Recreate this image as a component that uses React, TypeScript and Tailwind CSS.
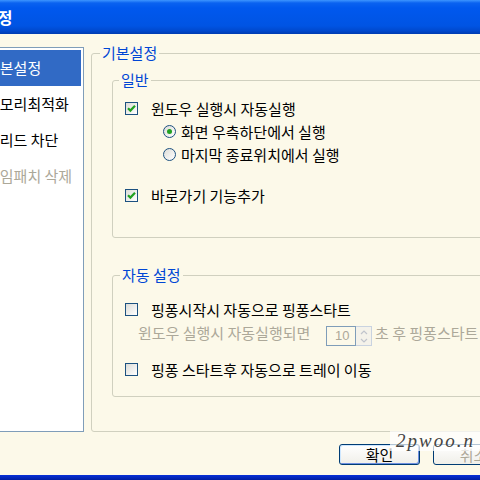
import React from 'react';

const Check = ({ checked, label, disabled }: { checked?: boolean; label: string; disabled?: boolean }) => (
  <div className="flex h-[23px] items-center">
    <span className="flex h-[13px] w-[13px] items-center justify-center border border-[#1C5180] bg-[linear-gradient(135deg,#DCDCD7,#FFFFFF)]">
      {checked && (
        <svg width="9" height="9" viewBox="0 0 9 9">
          <path d="M1 4.2 L3.4 6.6 L8 1.8" fill="none" stroke="#21A121" strokeWidth="2.2" />
        </svg>
      )}
    </span>
    <span className={`ml-[13px] ${disabled ? 'text-[#ACA899]' : 'text-black'}`}>{label}</span>
  </div>
);

const Radio = ({ checked, label }: { checked?: boolean; label: string }) => (
  <div className="flex h-[23px] items-center pl-[38px]">
    <span className="flex h-[13px] w-[13px] items-center justify-center rounded-full border border-[#1C5180] bg-[linear-gradient(135deg,#DCDCD7,#FFFFFF)]">
      {checked && <span className="h-[5px] w-[5px] rounded-full bg-[#21A121]" />}
    </span>
    <span className="ml-[5px]">{label}</span>
  </div>
);

const menu = [
  { name: '기본설정', selected: true },
  { name: '메모리최적화' },
  { name: '그리드 차단' },
  { name: '게임패치 삭제', disabled: true },
];

export default function App() {
  return (
    <div className="relative h-[480px] w-[480px] overflow-hidden bg-[#FCF9E9] font-['Noto_Sans_CJK_KR',sans-serif] text-[15px] leading-[16px]">
      <div className="ml-[-20px] flex h-[480px] w-[540px] flex-col">
        {/* title bar */}
        <div className="flex h-[34px] items-center bg-[linear-gradient(to_bottom,#3D95FF_0px,#0A62F0_3px,#0058EE_8px,#0054E3_26px,#0048CC_31px,#003CB0_34px)] pl-[3px]">
          <span className="text-[16px] font-bold text-white">설정</span>
        </div>

        <div className="flex items-start pt-[13px]">
          {/* left menu */}
          <div className="h-[385px] w-[104px] border border-[#7F9DB9] bg-white p-[2px]">
            {menu.map((m) => (
              <div
                key={m.name}
                className={`flex h-[36px] items-center whitespace-nowrap pl-[3px] ${
                  m.selected ? 'bg-[#316AC5] text-white' : m.disabled ? 'text-[#ACA899]' : 'text-black'
                }`}
              >
                {m.name}
              </div>
            ))}
          </div>

          {/* right panel */}
          <fieldset className="ml-[7px] mt-[-2px] h-[387px] w-[420px] rounded-[3px] border border-[#D0D0BF]">
            <legend className="ml-[8px] px-[2px] text-[#0046D5]">기본설정</legend>

            <fieldset className="ml-[20px] mt-[11px] h-[166px] w-[400px] rounded-[3px] border border-[#D0D0BF]">
              <legend className="ml-[6px] px-[2px] text-[#0046D5]">일반</legend>
              <div className="pl-[12px] pt-[9px]">
                <Check checked label="윈도우 실행시 자동실행" />
                <Radio checked label="화면 우측하단에서 실행" />
                <Radio label="마지막 종료위치에서 실행" />
                <div className="mt-[18px]">
                  <Check checked label="바로가기 기능추가" />
                </div>
              </div>
            </fieldset>

            <fieldset className="ml-[20px] mt-[29px] h-[130px] w-[400px] rounded-[3px] border border-[#D0D0BF]">
              <legend className="ml-[7px] px-[2px] text-[#0046D5]">자동 설정</legend>
              <div className="pl-[12px] pt-[15px]">
                <Check label="핑퐁시작시 자동으로 핑퐁스타트" />
                <div className="flex h-[24px] items-center whitespace-nowrap pl-[13px] text-[#ACA899]">
                  <span className="w-[188px]">윈도우 실행시 자동실행되면</span>
                  <div className="mt-[6px] flex h-[20px]">
                    <div className="flex w-[30px] items-center border border-[#7F9DB9] bg-[#FCF9E9] pl-[8px] font-['Liberation_Sans',sans-serif] text-[13px]">10</div>
                    <div className="flex w-[16px] flex-col items-center justify-center gap-[3px] border border-l-0 border-[#C9D3E0] bg-[#F4F2EA]">
                      <svg width="8" height="5" viewBox="0 0 8 5"><path d="M1 4 L4 1 L7 4" fill="none" stroke="#C0C4CC" strokeWidth="1.2" /></svg>
                      <svg width="8" height="5" viewBox="0 0 8 5"><path d="M1 1 L4 4 L7 1" fill="none" stroke="#C0C4CC" strokeWidth="1.2" /></svg>
                    </div>
                  </div>
                  <span className="ml-[3px]">초 후 핑퐁스타트</span>
                </div>
                <div className="mt-[13px]">
                  <Check label="핑퐁 스타트후 자동으로 트레이 이동" />
                </div>
              </div>
            </fieldset>
          </fieldset>
        </div>

        {/* buttons */}
        <div className="mt-[12px] flex gap-[13px] pl-[359px]">
          <button className="h-[21px] w-[81px] rounded-[3px] border border-[#003C74] bg-[linear-gradient(to_bottom,#FFFFFF,#F0EFE9)] text-[15px] leading-[16px] text-black shadow-[inset_-1px_-1px_0_#6D8FE0,inset_1px_1px_0_#CEE7FF]">
            확인
          </button>
          <button className="h-[21px] w-[81px] rounded-[3px] border border-[#003C74] bg-[linear-gradient(to_bottom,#FFFFFF,#F0EFE9)] text-[15px] leading-[16px] text-[#ACA899]">
            취소
          </button>
        </div>

        <div className="mt-auto h-[5px] bg-[linear-gradient(to_bottom,#0831D9,#001EA0)]" />
      </div>

      {/* watermark */}
      <div className="absolute left-[390px] top-[431px] h-[20px] w-[90px] bg-white/70">
        <span className="ml-[6px] font-['Liberation_Serif',serif] text-[19px] italic leading-[20px] tracking-[2px] text-[#444]">2pwoo.n</span>
      </div>
    </div>
  );
}
